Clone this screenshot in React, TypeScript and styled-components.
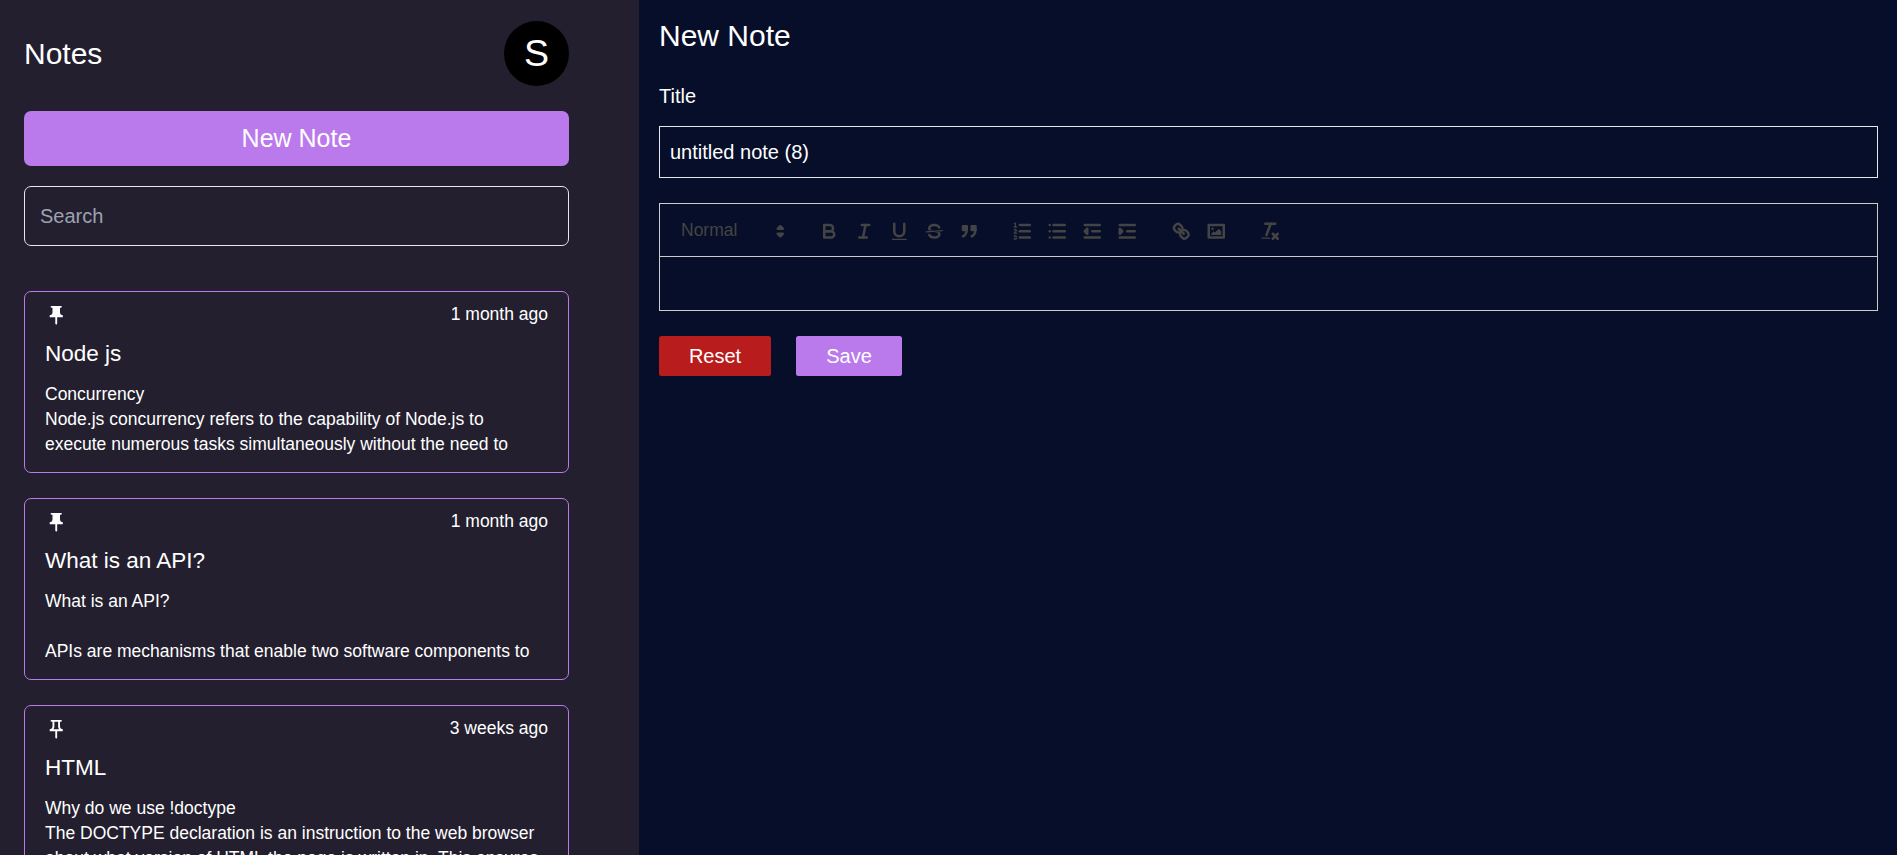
import React from "react";
import styled, { createGlobalStyle } from "styled-components";
import { MdOutlinePushPin, MdPushPin } from "react-icons/md";

const GlobalStyle = createGlobalStyle`
  *, *::before, *::after { box-sizing: border-box; }
  html { font-size: 20px; }
  body {
    margin: 0;
    overflow: hidden;
    background: #060e29;
    color: #fff;
    font-family: "Liberation Sans", Arial, sans-serif;
    line-height: 1.5;
  }
  h1, h2, h3, p { margin: 0; font-weight: 400; }
  button, input { font: inherit; color: inherit; }
`;

const Page = styled.div`
  display: flex;
  height: 100vh;
`;

const Sidebar = styled.aside`
  flex: none;
  width: 639px;
  height: 100vh;
  padding: 21px 70px 0 24px;
  overflow: hidden;
  background: #231f2f;
`;

const SidebarHeader = styled.header`
  display: flex;
  align-items: flex-start;
  justify-content: space-between;
  height: 65px;

  h1 { margin-top: 13px; }
`;

const Heading = styled.h1`
  font-size: 1.5rem;
  line-height: 2rem;
`;

const Avatar = styled.div`
  display: grid;
  place-items: center;
  width: 65px;
  height: 65px;
  border-radius: 50%;
  background: #000;
  font-size: 1.875rem;
  line-height: 2.25rem;
`;

const NewNoteButton = styled.button`
  display: block;
  width: 100%;
  height: 55px;
  margin-top: 25px;
  padding: 0;
  border: 0;
  border-radius: 7px;
  background: #ba7aec;
  font-size: 1.25rem;
  line-height: 1.75rem;
`;

const SearchInput = styled.input`
  display: block;
  width: 100%;
  height: 60px;
  margin-top: 20px;
  padding: 0 15px;
  border: 1px solid #e5e7eb;
  border-radius: 7px;
  outline: none;
  background: transparent;

  &::placeholder {
    color: #9ca3af;
    opacity: 1;
  }
`;

const NoteList = styled.div`
  display: flex;
  flex-direction: column;
  gap: 25px;
  margin-top: 45px;
`;

const NoteCard = styled.article`
  flex: none;
  height: 182px;
  padding: 10px 20px 0;
  border: 1px solid #ba7aec;
  border-radius: 7px;
`;

const NoteMeta = styled.div`
  display: flex;
  align-items: flex-start;
  justify-content: space-between;
  height: 25px;
  font-size: 0.875rem;
  line-height: 1.25rem;

  svg {
    display: block;
    width: 22.5px;
    height: 22.5px;
    margin-top: 2px;
  }
`;

const NoteTitle = styled.h3`
  margin-top: 9px;
  font-size: 1.125rem;
  line-height: 1.75rem;
`;

const NoteBody = styled.p`
  height: 75px;
  margin-top: 11px;
  overflow: hidden;
  font-size: 0.875rem;
  line-height: 1.25rem;
  white-space: pre-line;
`;

const Editor = styled.main`
  flex: 1;
  min-width: 0;
  padding: 16px 19px 0 20px;
`;

const FieldLabel = styled.label`
  display: block;
  margin-top: 25px;
  line-height: 30px;
`;

const TitleInput = styled.input`
  display: block;
  width: 100%;
  height: 52px;
  margin-top: 15px;
  padding: 0 10px;
  border: 1px solid #e5e7eb;
  border-radius: 0;
  outline: none;
  background: transparent;
`;

const RichText = styled.section`
  margin-top: 25px;
  border: 1px solid #ccc;
`;

const Toolbar = styled.div`
  display: flex;
  height: 53px;
  padding: 12px 10px 0;
  border-bottom: 1px solid #ccc;
`;

const FormatPicker = styled.div`
  display: flex;
  justify-content: space-between;
  width: 122.5px;
  height: 30px;
  margin-right: 18.75px;
  padding: 0 1px 0 11px;
  color: #444;
  font-size: 17.5px;
  line-height: 29px;
`;

const ToolGroup = styled.div`
  display: flex;
  margin-right: 18.75px;
`;

const ToolButton = styled.button`
  width: 35px;
  height: 30px;
  padding: 3.75px 6.25px;
  border: 0;
  background: none;
`;

const Glyph = styled.svg`
  display: block;
  width: 22.5px;
  height: 22.5px;
  fill: none;
  stroke: #444;
  stroke-width: 2;
  stroke-linecap: round;
  stroke-linejoin: round;

  .thin { stroke-width: 1; }
  .fill { fill: #444; stroke: none; }
  .solid { fill: #444; }
`;

const PickerGlyph = styled(Glyph)`
  margin-top: 3.75px;
`;

const EditArea = styled.div`
  height: 53px;
`;

const Actions = styled.div`
  display: flex;
  gap: 25px;
  margin-top: 25px;
`;

const ActionButton = styled.button<{ $color: string; $width: number }>`
  width: ${(p) => p.$width}px;
  height: 40px;
  padding: 0;
  border: 0;
  border-radius: 2.5px;
  background: ${(p) => p.$color};
`;

const tools: { name: string; art: React.ReactNode }[][] = [
  [
    {
      name: "Bold",
      art: (
        <>
          <path d="M5,4H9.5A2.5,2.5,0,0,1,12,6.5v0A2.5,2.5,0,0,1,9.5,9H5V4Z" />
          <path d="M5,9h5.5A2.5,2.5,0,0,1,13,11.5v0A2.5,2.5,0,0,1,10.5,14H5V9Z" />
        </>
      ),
    },
    {
      name: "Italic",
      art: (
        <>
          <line x1="7" x2="13" y1="4" y2="4" />
          <line x1="5" x2="11" y1="14" y2="14" />
          <line x1="8" x2="10" y1="14" y2="4" />
        </>
      ),
    },
    {
      name: "Underline",
      art: (
        <>
          <path d="M5,3V9a4.012,4.012,0,0,0,4,4H9a4.012,4.012,0,0,0,4-4V3" />
          <rect className="fill" height="1" rx="0.5" width="12" x="3" y="15" />
        </>
      ),
    },
    {
      name: "Strike",
      art: (
        <>
          <line className="thin" x1="15.5" x2="2.5" y1="8.5" y2="9.5" />
          <path className="fill" d="M9.007,8C6.542,7.791,6,7.519,6,6.5,6,5.792,7.283,5,9,5c1.571,0,2.765.679,2.969,1.309a1,1,0,0,0,1.9-.617C13.356,4.106,11.354,3,9,3,6.2,3,4,4.538,4,6.5a3.2,3.2,0,0,0,.5,1.843Z" />
          <path className="fill" d="M8.984,10C11.457,10.208,12,10.479,12,11.5c0,0.708-1.283,1.5-3,1.5-1.571,0-2.765-.679-2.969-1.309a1,1,0,1,0-1.9.617C4.644,13.894,6.646,15,9,15c2.8,0,5-1.538,5-3.5a3.2,3.2,0,0,0-.5-1.843Z" />
        </>
      ),
    },
    {
      name: "Blockquote",
      art: (
        <>
          <rect className="solid" height="3" width="3" x="4" y="5" />
          <rect className="solid" height="3" width="3" x="11" y="5" />
          <path className="solid" d="M7,8c0,4.031-3,5-3,5" />
          <path className="solid" d="M14,8c0,4.031-3,5-3,5" />
        </>
      ),
    },
  ],
  [
    {
      name: "Ordered list",
      art: (
        <>
          <line x1="7" x2="15" y1="4" y2="4" />
          <line x1="7" x2="15" y1="9" y2="9" />
          <line x1="7" x2="15" y1="14" y2="14" />
          <line className="thin" x1="2.5" x2="4.5" y1="5.5" y2="5.5" />
          <path className="fill" d="M3.5,6A0.5,0.5,0,0,1,3,5.5V3.085l-0.276.138A0.5,0.5,0,0,1,2.053,3c-0.124-.247-0.023-0.324.224-0.447l1-.5A0.5,0.5,0,0,1,4,2.5v3A0.5,0.5,0,0,1,3.5,6Z" />
          <path className="thin" d="M4.5,10.5h-2c0-.234,1.85-1.076,1.85-2.234A0.959,0.959,0,0,0,2.5,8.156" />
          <path className="thin" d="M2.5,14.846a0.959,0.959,0,0,0,1.85-.109A0.7,0.7,0,0,0,3.75,14a0.688,0.688,0,0,0,.6-0.736,0.959,0.959,0,0,0-1.85-.109" />
        </>
      ),
    },
    {
      name: "Bullet list",
      art: (
        <>
          <line x1="6" x2="15" y1="4" y2="4" />
          <line x1="6" x2="15" y1="9" y2="9" />
          <line x1="6" x2="15" y1="14" y2="14" />
          <line x1="3" x2="3" y1="4" y2="4" />
          <line x1="3" x2="3" y1="9" y2="9" />
          <line x1="3" x2="3" y1="14" y2="14" />
        </>
      ),
    },
    {
      name: "Outdent",
      art: (
        <>
          <line x1="3" x2="15" y1="14" y2="14" />
          <line x1="3" x2="15" y1="4" y2="4" />
          <line x1="9" x2="15" y1="9" y2="9" />
          <polyline points="5 7 5 11 3 9 5 7" />
        </>
      ),
    },
    {
      name: "Indent",
      art: (
        <>
          <line x1="3" x2="15" y1="14" y2="14" />
          <line x1="3" x2="15" y1="4" y2="4" />
          <line x1="9" x2="15" y1="9" y2="9" />
          <polyline className="solid" points="3 7 3 11 5 9 3 7" />
        </>
      ),
    },
  ],
  [
    {
      name: "Link",
      art: (
        <>
          <line x1="7" x2="11" y1="7" y2="11" />
          <path d="M8.9,4.577a3.476,3.476,0,0,1,.36,4.679A3.476,3.476,0,0,1,4.577,8.9C3.185,7.5,2.035,6.4,4.217,4.217S7.5,3.185,8.9,4.577Z" />
          <path d="M13.423,9.1a3.476,3.476,0,0,0-4.679-.36,3.476,3.476,0,0,0,.36,4.679c1.392,1.392,2.5,2.542,4.679.36S14.815,10.5,13.423,9.1Z" />
        </>
      ),
    },
    {
      name: "Image",
      art: (
        <>
          <rect height="10" width="12" x="3" y="4" />
          <circle className="fill" cx="6" cy="7" r="1" />
          <polyline className="fill" points="5 12 5 11 7 9 8 10 11 7 13 9 13 12 5 12" />
        </>
      ),
    },
  ],
  [
    {
      name: "Clear formatting",
      art: (
        <>
          <line x1="5" x2="13" y1="3" y2="3" />
          <line x1="6" x2="9.35" y1="12" y2="3" />
          <line x1="11" x2="15" y1="11" y2="15" />
          <line x1="15" x2="11" y1="11" y2="15" />
          <rect className="fill" height="1" rx="0.5" width="7" x="2" y="14" />
        </>
      ),
    },
  ],
];

const notes = [
  {
    title: "Node js",
    age: "1 month ago",
    pinned: true,
    body: "Concurrency\nNode.js concurrency refers to the capability of Node.js to execute numerous tasks simultaneously without the need to",
  },
  {
    title: "What is an API?",
    age: "1 month ago",
    pinned: true,
    body: "What is an API?\n\nAPIs are mechanisms that enable two software components to",
  },
  {
    title: "HTML",
    age: "3 weeks ago",
    pinned: false,
    body: "Why do we use !doctype\nThe DOCTYPE declaration is an instruction to the web browser about what version of HTML the page is written in. This ensures",
  },
];

export default function App() {
  return (
    <>
      <GlobalStyle />
      <Page>
        <Sidebar>
          <SidebarHeader>
            <Heading>Notes</Heading>
            <Avatar>S</Avatar>
          </SidebarHeader>
          <NewNoteButton>New Note</NewNoteButton>
          <SearchInput placeholder="Search" />
          <NoteList>
            {notes.map((note) => (
              <NoteCard key={note.title}>
                <NoteMeta>
                  {note.pinned ? <MdPushPin /> : <MdOutlinePushPin />}
                  <span>{note.age}</span>
                </NoteMeta>
                <NoteTitle>{note.title}</NoteTitle>
                <NoteBody>{note.body}</NoteBody>
              </NoteCard>
            ))}
          </NoteList>
        </Sidebar>
        <Editor>
          <Heading as="h2">New Note</Heading>
          <FieldLabel htmlFor="title">Title</FieldLabel>
          <TitleInput id="title" defaultValue="untitled note (8)" />
          <RichText>
            <Toolbar>
              <FormatPicker>
                Normal
                <PickerGlyph viewBox="0 0 18 18">
                  <polygon points="7 11 9 13 11 11 7 11" />
                  <polygon points="7 7 9 5 11 7 7 7" />
                </PickerGlyph>
              </FormatPicker>
              {tools.map((group) => (
                <ToolGroup key={group[0].name}>
                  {group.map((tool) => (
                    <ToolButton key={tool.name} aria-label={tool.name}>
                      <Glyph viewBox="0 0 18 18">{tool.art}</Glyph>
                    </ToolButton>
                  ))}
                </ToolGroup>
              ))}
            </Toolbar>
            <EditArea />
          </RichText>
          <Actions>
            <ActionButton $color="#b91c1c" $width={112}>Reset</ActionButton>
            <ActionButton $color="#ba7aec" $width={106}>Save</ActionButton>
          </Actions>
        </Editor>
      </Page>
    </>
  );
}
